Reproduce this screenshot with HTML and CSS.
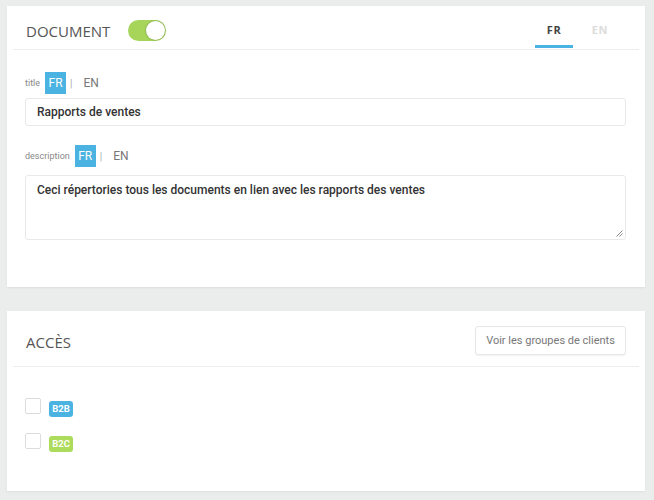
FILE: index.html
```html
<!DOCTYPE html>
<html lang="fr">
<head>
<meta charset="utf-8">
<title>Document</title>
<link rel="stylesheet" href="styles.css">
</head>
<body>
<div class="page">
  <section class="card card-doc">
    <header class="card-head">
      <div class="head-left">
        <h2 class="card-title">DOCUMENT</h2>
        <span class="toggle"><span class="knob"></span></span>
      </div>
      <nav class="tabs">
        <span class="tab active">FR</span>
        <span class="tab">EN</span>
      </nav>
    </header>
    <div class="card-body">
      <div class="field-label label-title">
        <span class="lbl">title</span>
        <span class="lang on">FR</span>
        <span class="sep">|</span>
        <span class="lang">EN</span>
      </div>
      <div class="input">Rapports de ventes</div>
      <div class="field-label label-desc">
        <span class="lbl">description</span>
        <span class="lang on">FR</span>
        <span class="sep">|</span>
        <span class="lang">EN</span>
      </div>
      <div class="textarea">Ceci répertories tous les documents en lien avec les rapports des ventes
        <svg class="grip" width="7" height="7" viewBox="0 0 7 7"><path d="M6.5 0.5 L0.5 6.5 M6.5 3.5 L3.5 6.5" stroke="#888" stroke-width="1"/></svg>
      </div>
    </div>
  </section>

  <section class="card card-access">
    <header class="card-head head-access">
      <h2 class="card-title">ACCÈS</h2>
      <button class="btn">Voir les groupes de clients</button>
    </header>
    <div class="access-body">
      <div class="row"><span class="check"></span><span class="tag b2b">B2B</span></div>
      <div class="row"><span class="check"></span><span class="tag b2c">B2C</span></div>
    </div>
  </section>
</div>
</body>
</html>
```

FILE: styles.css
```css
html, body {
  margin: 0;
  padding: 0;
}
body {
  background: #ebecec;
  font-family: Roboto, "Liberation Sans", sans-serif;
  color: #333;
  width: 654px;
  height: 500px;
  overflow: hidden;
}
.page {
  padding: 6px 9px 0 7px;
  display: flex;
  flex-direction: column;
  gap: 24px;
}
.card {
  background: #fff;
  box-shadow: 0 1px 2px rgba(0,0,0,0.06);
}
.card-doc {
  height: 281px;
}
.card-access {
  height: 180px;
}
.card-head {
  margin: 0 6px;
  height: 44px;
  box-sizing: border-box;
  border-bottom: 1px solid #ebedee;
  display: flex;
  align-items: center;
  justify-content: space-between;
  padding: 0 20px 0 13px;
}
.head-left {
  display: flex;
  align-items: center;
  gap: 18px;
  padding-top: 7px;
}
.card-title {
  margin: 0;
  font-family: "Open Sans", sans-serif;
  font-weight: 400;
  font-size: 15px;
  color: #555;
}
.toggle {
  width: 38px;
  height: 21px;
  border-radius: 11px;
  background: #a6d55a;
  display: flex;
  align-items: center;
  justify-content: flex-end;
  padding-right: 1px;
  box-sizing: border-box;
  margin-top: -2px;
}
.knob {
  width: 19px;
  height: 19px;
  border-radius: 50%;
  background: #fff;
  box-shadow: 0 0 2px rgba(0,0,0,0.35);
}
.tabs {
  display: flex;
  gap: 8px;
  align-self: stretch;
}
.tab {
  width: 38px;
  display: flex;
  align-items: center;
  justify-content: center;
  font-family: "Open Sans", sans-serif;
  font-weight: 700;
  font-size: 11px;
  letter-spacing: 0.6px;
  color: #dcdcdc;
  padding-top: 7px;
  box-sizing: border-box;
  border-bottom: 3px solid transparent;
  margin-bottom: 1px;
}
.tab.active {
  color: #444;
  border-bottom-color: #4bb3e1;
}
.card-body {
  padding: 22px 19px 0 18px;
}
.field-label {
  display: flex;
  align-items: center;
  height: 22px;
}
.lbl {
  font-size: 9px;
  color: #888;
  margin-right: 5px;
}
.lang {
  font-size: 12px;
  color: #777;
  height: 22px;
  line-height: 22px;
  text-align: center;
}
.lang.on {
  width: 21px;
  background: #4bb3e1;
  color: #fff;
}
.sep {
  color: #aaa;
  font-size: 10px;
  margin: 0 11px 0 4px;
}
.label-title {
  margin-bottom: 4px;
}
.label-desc {
  margin-top: 19px;
  margin-bottom: 8px;
}
.input {
  height: 28px;
  box-sizing: border-box;
  border: 1px solid #e8e9ea;
  border-radius: 3px;
  padding: 0 11px;
  display: flex;
  align-items: center;
  font-size: 12px;
  font-weight: 500;
  color: #333;
}
.textarea {
  position: relative;
  height: 65px;
  box-sizing: border-box;
  border: 1px solid #e8e9ea;
  border-radius: 3px;
  padding: 7px 11px;
  font-size: 12px;
  font-weight: 500;
  color: #333;
  line-height: 14px;
}
.grip {
  position: absolute;
  right: 2px;
  bottom: 2px;
}
.head-access {
  height: 56px;
  padding-right: 13px;
}
.head-access .card-title {
  padding-top: 6px;
}
.btn {
  width: 151px;
  height: 29px;
  background: #fff;
  border: 1px solid #e6e7e8;
  border-radius: 3px;
  box-shadow: 0 1px 1px rgba(0,0,0,0.05);
  font-family: Roboto, sans-serif;
  font-size: 11px;
  color: #777;
  padding: 0;
  margin-top: 3px;
}
.access-body {
  padding: 32px 18px 0;
  display: flex;
  flex-direction: column;
  gap: 18px;
}
.row {
  display: flex;
  align-items: center;
  gap: 8px;
  height: 17px;
}
.check {
  width: 16px;
  height: 16px;
  box-sizing: border-box;
  border: 1px solid #dcdcdc;
  border-radius: 2px;
  margin-top: -3px;
}
.tag {
  height: 16px;
  width: 24px;
  text-align: center;
  border-radius: 3px;
  color: #fff;
  font-family: Roboto, sans-serif;
  font-weight: 700;
  font-size: 9.5px;
  line-height: 16px;
  margin-top: 3px;
}
.tag.b2b {
  background: #4bb3e1;
}
.tag.b2c {
  background: #addb5c;
}
```
